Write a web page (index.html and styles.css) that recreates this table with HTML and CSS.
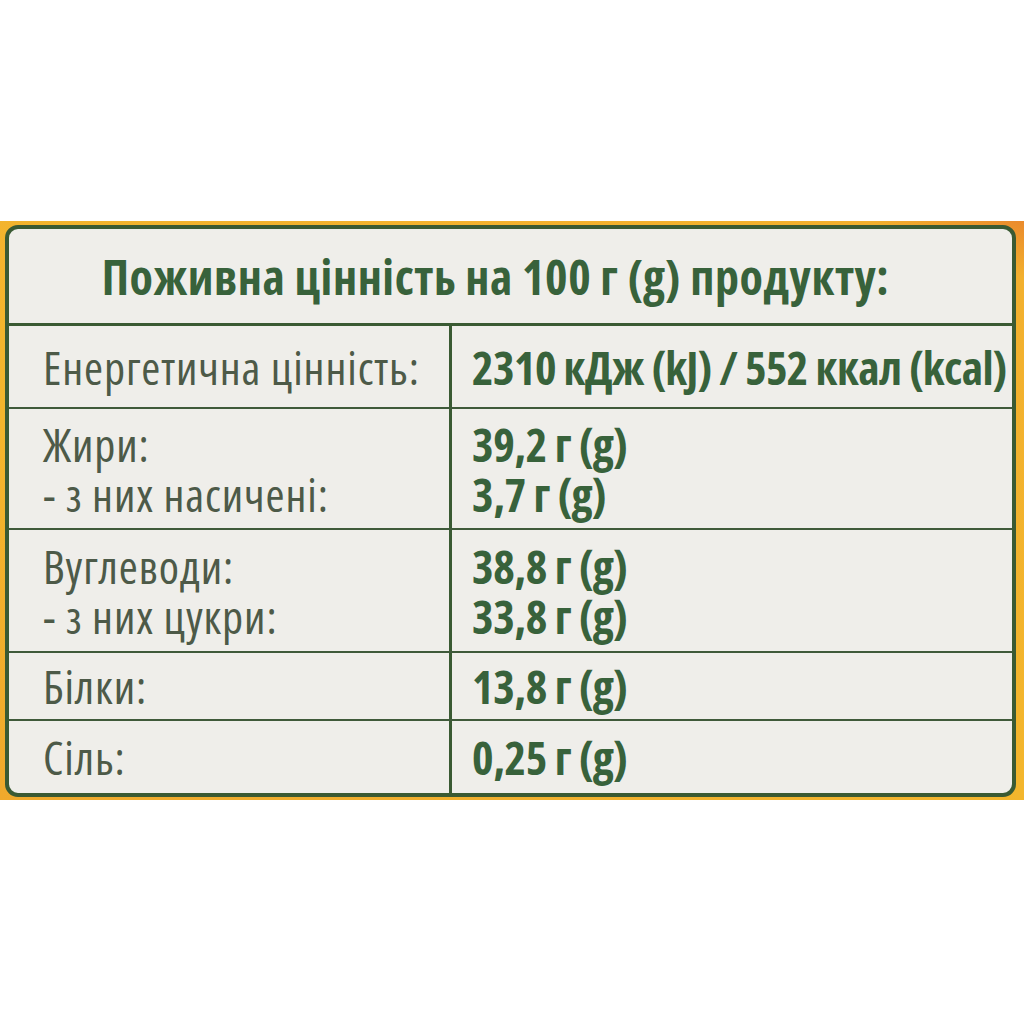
FILE: index.html
```html
<!DOCTYPE html>
<html lang="uk">
<head>
<meta charset="utf-8">
<title>Поживна цінність</title>
<link rel="stylesheet" href="styles.css">
</head>
<body>
<div class="page">
  <div class="top"></div>
  <div class="band">
    <div class="label-box">
      <div class="head"><span class="t">Поживна цінність на 100 г (g) продукту:</span></div>
      <div class="row r1">
        <div class="k"><span class="t">Енергетична цінність:</span></div>
        <div class="v tight"><span class="t">2310 кДж (kJ) / 552 ккал (kcal)</span></div>
      </div>
      <div class="row r2">
        <div class="k"><span class="t">Жири:<br>- з них насичені:</span></div>
        <div class="v"><span class="t">39,2 г (g)<br>3,7 г (g)</span></div>
      </div>
      <div class="row r3">
        <div class="k"><span class="t">Вуглеводи:<br>- з них цукри:</span></div>
        <div class="v"><span class="t">38,8 г (g)<br>33,8 г (g)</span></div>
      </div>
      <div class="row r4">
        <div class="k"><span class="t">Білки:</span></div>
        <div class="v"><span class="t">13,8 г (g)</span></div>
      </div>
      <div class="row r5">
        <div class="k"><span class="t">Сіль:</span></div>
        <div class="v"><span class="t">0,25 г (g)</span></div>
      </div>
    </div>
  </div>
  <div class="bottom"></div>
</div>
</body>
</html>
```
FILE: styles.css
```css
html, body {
  margin: 0;
  padding: 0;
  background: #ffffff;
}
.page {
  width: 1024px;
  height: 1024px;
  display: flex;
  flex-direction: column;
  font-family: "Open Sans", "Noto Sans", sans-serif;
  font-stretch: 75%;
}
.top {
  height: 221px;
  background: #ffffff;
}
.band {
  height: 579px;
  box-sizing: border-box;
  padding: 4px 8px 3px 5px;
  background: linear-gradient(200deg, #ea8a2c 0%, #f2b02e 6%, #f3b62d 60%, #efa92c 100%);
}
.label-box {
  height: 100%;
  box-sizing: border-box;
  border: 4px solid #3a5a33;
  border-radius: 13px;
  background: #efeeea;
  display: flex;
  flex-direction: column;
  overflow: hidden;
}
.head {
  height: 94px;
  border-bottom: 3px solid #3a5a33;
  display: flex;
  align-items: center;
  justify-content: center;
  padding-right: 30px;
  color: #38623b;
  font-weight: 700;
  font-size: 48px;
  letter-spacing: 0.55px;
  white-space: nowrap;
}
.row {
  display: grid;
  grid-template-columns: 443px 1fr;
  border-bottom: 2px solid #3f5a3a;
}
.row.r5 { border-bottom: none; }
.r1 { height: 81px; }
.r2 { height: 119px; }
.r3 { height: 121px; }
.r4 { height: 66px; }
.r5 { height: 72px; }
.k, .v {
  display: flex;
  align-items: center;
  white-space: nowrap;
  line-height: 50px;
  font-size: 46px;
}
.k {
  border-right: 3px solid #3a5a33;
  padding-left: 34px;
  color: #4d5a48;
  font-weight: 400;
  letter-spacing: 0.9px;
}
.v {
  padding-left: 20px;
  color: #38623b;
  font-weight: 700;
  letter-spacing: -0.4px;
}
.v.tight {
  letter-spacing: -0.6px;
}
.bottom {
  flex: 1;
  background: #ffffff;
}
```
